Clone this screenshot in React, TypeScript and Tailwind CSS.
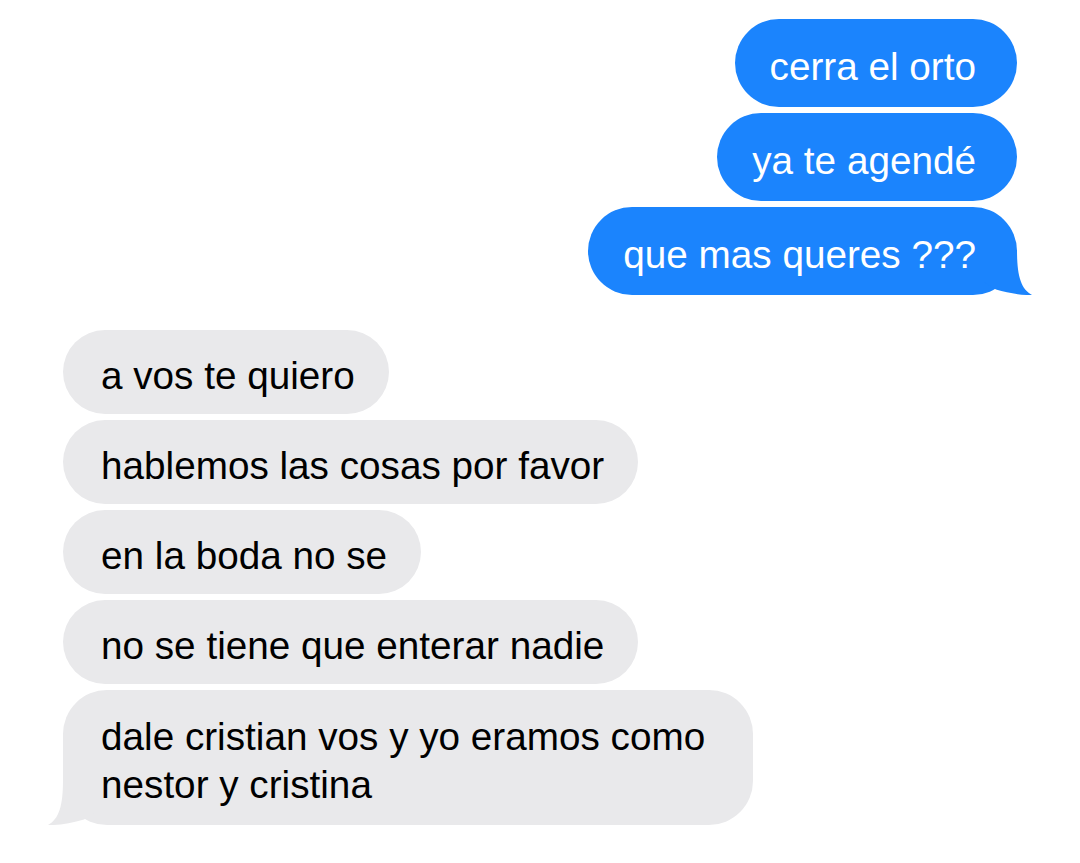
import React from "react";

type Side = "out" | "in";

type Msg = { side: Side; text: string; tail?: boolean; wide?: boolean };

const messages: Msg[] = [
  { side: "out", text: "cerra el orto" },
  { side: "out", text: "ya te agendé" },
  { side: "out", text: "que mas queres ???", tail: true },
  { side: "in", text: "a vos te quiero" },
  { side: "in", text: "hablemos las cosas por favor" },
  { side: "in", text: "en la boda no se" },
  { side: "in", text: "no se tiene que enterar nadie" },
  { side: "in", text: "dale cristian vos y yo eramos como nestor y cristina", tail: true, wide: true },
];

// Curled tail drawn for the bottom-right corner; mirrored for incoming bubbles.
function Tail({ color, mirrored }: { color: string; mirrored?: boolean }) {
  return (
    <svg
      width="50"
      height="49"
      viewBox="0 0 50 49"
      className={
        mirrored
          ? "absolute bottom-0 left-[-17px] -scale-x-100"
          : "absolute bottom-0 right-[-17px]"
      }
    >
      <path
        d="M0 4 L33 4 C33 30 37 43 48 49 C38 49.5 24 47 12 43.5 L0 36 Z"
        fill={color}
      />
    </svg>
  );
}

function Bubble({ msg }: { msg: Msg }) {
  const out = msg.side === "out";
  return (
    <div className={out ? "flex justify-end" : "flex justify-start"}>
      <div
        className={
          out
            ? "relative rounded-[44px] bg-[#1b84fd] pt-6 pb-4 pl-[35px] pr-[41px] text-white"
            : msg.wide
            ? "relative max-w-[690px] rounded-[44px] bg-[#e9e9eb] pt-[23px] pb-4 pl-[38px] pr-[33px] text-black"
            : "relative rounded-[44px] bg-[#e9e9eb] pt-[22px] pb-[14px] pl-[38px] pr-[34px] text-black"
        }
      >
        {msg.tail && <Tail color={out ? "#1b84fd" : "#e9e9eb"} mirrored={!out} />}
        <p className="relative text-[38.7px] leading-[48px]">{msg.text}</p>
      </div>
    </div>
  );
}

export default function App() {
  const sent = messages.filter((m) => m.side === "out");
  const received = messages.filter((m) => m.side === "in");
  return (
    <div
      className="min-h-[863px] w-[1080px] bg-white pl-[63px] pr-[63px] pt-[19px]"
      style={{ fontFamily: '"Liberation Sans", Arial, sans-serif' }}
    >
      <div className="flex flex-col gap-[6px]">
        {sent.map((m, i) => (
          <Bubble key={i} msg={m} />
        ))}
      </div>
      <div className="mt-[35px] flex flex-col gap-[6px]">
        {received.map((m, i) => (
          <Bubble key={i} msg={m} />
        ))}
      </div>
    </div>
  );
}
